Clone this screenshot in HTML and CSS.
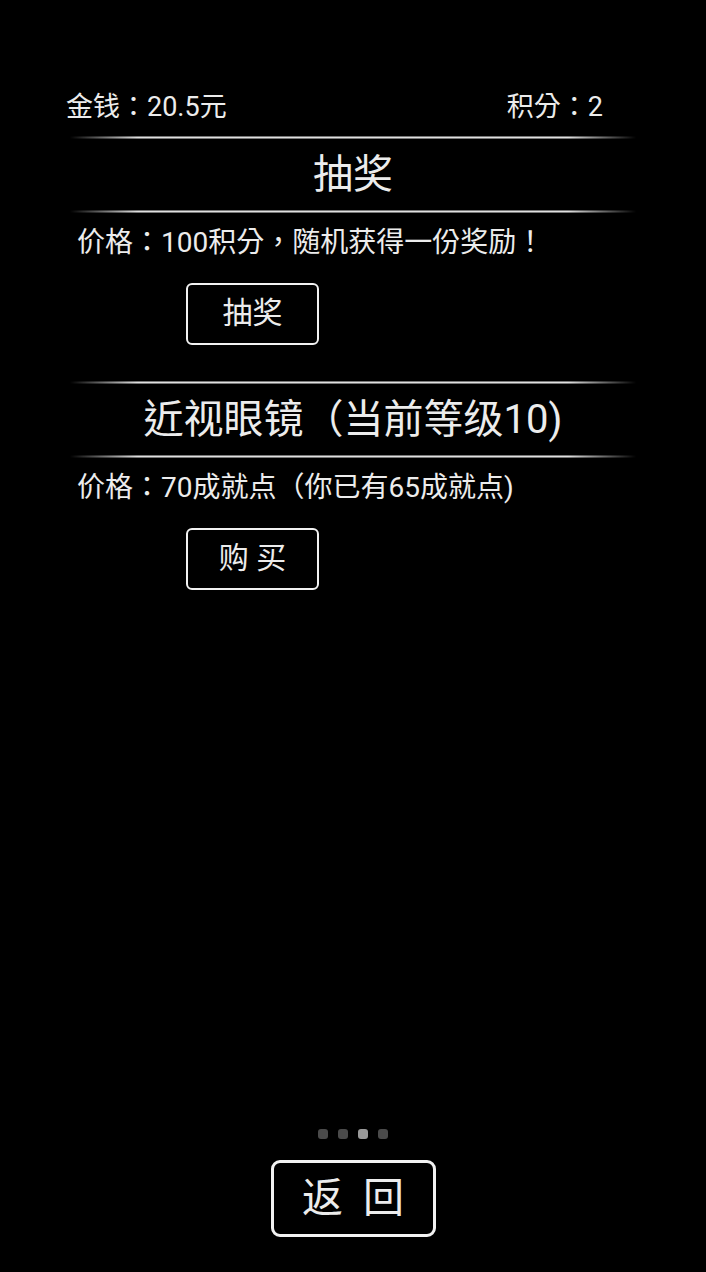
FILE: index.html
```html
<!DOCTYPE html>
<html lang="zh-CN">
<head>
    <meta charset="UTF-8">
    <meta name="viewport" content="width=device-width, initial-scale=1.0">
    <title>商店</title>
    <link rel="stylesheet" href="styles.css">
</head>
<body>

<div class="page">
    <div class="stats">
        <span>金钱：20.5元</span>
        <span>积分：2</span>
    </div>

    <div class="item">
        <div class="divider"></div>
        <div class="item-title">抽奖</div>
        <div class="divider"></div>
        <p class="price">价格：100积分，随机获得一份奖励！</p>
        <button class="btn">抽奖</button>
    </div>

    <div class="item">
        <div class="divider"></div>
        <div class="item-title">近视眼镜（当前等级10)</div>
        <div class="divider"></div>
        <p class="price">价格：70成就点（你已有65成就点)</p>
        <button class="btn">购 买</button>
    </div>

    <div class="footer">
        <div class="dots">
            <span class="dot"></span>
            <span class="dot"></span>
            <span class="dot active"></span>
            <span class="dot"></span>
        </div>
        <button class="btn btn-back">返 回</button>
    </div>
</div>

</body>
</html>
```

FILE: styles.css
```css
body {
    margin: 0;
    background: #000;
    color: #ececec;
    font-family: Roboto, "Noto Sans CJK TC", sans-serif;
    /* keep full-width punctuation centred in its cell */
    font-feature-settings: "locl" 0;
}
.page {
    height: 100vh;
    display: flex;
    flex-direction: column;
    padding-top: 92px;
    box-sizing: border-box;
}
.stats {
    display: flex;
    justify-content: space-between;
    padding: 0 103px 0 66px;
    font-size: 27px;
    line-height: 30px;
    margin-bottom: 14px;
}
.item {
    margin: 0 70px 36px;
}
.divider {
    height: 3px;
    background: linear-gradient(to bottom, #444, #e0e0e0, #444);
    -webkit-mask-image: linear-gradient(to right, transparent, #000 12%, #000 88%, transparent);
    mask-image: linear-gradient(to right, transparent, #000 12%, #000 88%, transparent);
}
.item-title {
    text-align: center;
    font-size: 40px;
    line-height: 71px;
    height: 71px;
}
.price {
    margin: 15px 0 25px;
    padding-left: 7px;
    font-size: 28px;
    line-height: 30px;
}
.btn {
    display: block;
    width: 133px;
    height: 62px;
    margin-left: 116px;
    background: #000;
    color: #ececec;
    border: 2px solid #f2f2f2;
    border-radius: 6px;
    font-family: inherit;
    font-size: 30px;
    line-height: 1;
    padding: 0 0 3px;
}
.footer {
    margin-top: auto;
    padding-bottom: 35px;
    display: flex;
    flex-direction: column;
    align-items: center;
}
.dots {
    display: flex;
    gap: 10px;
    margin-bottom: 21px;
}
.dot {
    width: 10px;
    height: 10px;
    border-radius: 3px;
    background: #4a4a4a;
}
.dot.active {
    background: #9a9a9a;
}
.btn-back {
    width: 165px;
    height: 77px;
    margin-left: 0;
    border-width: 3px;
    border-radius: 9px;
    font-size: 41px;
    letter-spacing: 5px;
    padding: 0 0 1px 5px;
}
```
